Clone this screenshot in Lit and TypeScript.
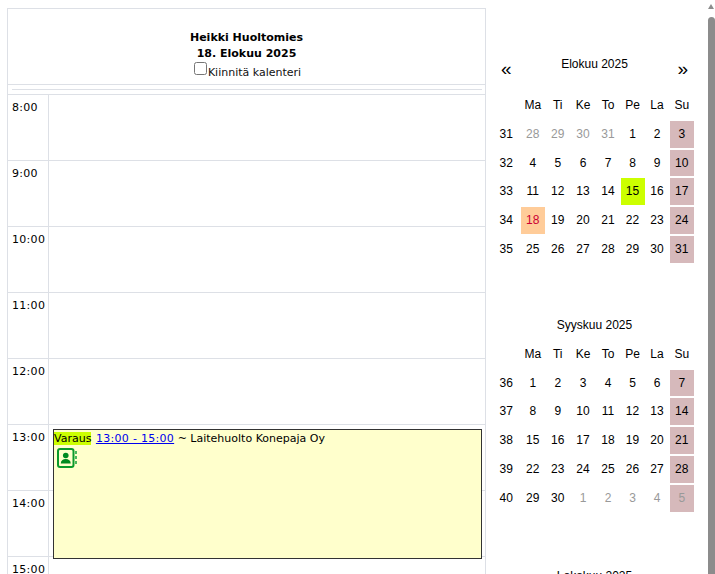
import { LitElement, html, css } from "lit";
import { customElement } from "lit/decorators.js";

const aug: [number, number[]][] = [
  [31, [28, 29, 30, 31, 1, 2, 3]],
  [32, [4, 5, 6, 7, 8, 9, 10]],
  [33, [11, 12, 13, 14, 15, 16, 17]],
  [34, [18, 19, 20, 21, 22, 23, 24]],
  [35, [25, 26, 27, 28, 29, 30, 31]],
];
const sep: [number, number[]][] = [
  [36, [1, 2, 3, 4, 5, 6, 7]],
  [37, [8, 9, 10, 11, 12, 13, 14]],
  [38, [15, 16, 17, 18, 19, 20, 21]],
  [39, [22, 23, 24, 25, 26, 27, 28]],
  [40, [29, 30, 1, 2, 3, 4, 5]],
];
const heads = ["Ma", "Ti", "Ke", "To", "Pe", "La", "Su"];
const hours = ["8:00", "9:00", "10:00", "11:00", "12:00", "13:00", "14:00", "15:00"];

@customElement("app-root")
export class AppRoot extends LitElement {
  static styles = css`
    :host {
      display: block;
      width: 715px;
      height: 574px;
      overflow: hidden;
      background: #fff;
      position: relative;
    }
    .page {
      display: flex;
      align-items: flex-start;
      padding: 8px 0 0 7px;
      color: #000;
    }
    .left {
      width: 479px;
      flex: none;
      box-sizing: border-box;
      border: 1px solid #dde0e6;
      border-bottom: 0;
      font: 11px "DejaVu Sans", sans-serif;
    }
    .head {
      height: 76px;
      box-sizing: border-box;
      padding-top: 21px;
      text-align: center;
      line-height: 16px;
      border-bottom: 1px solid #dde0e6;
    }
    .head b {
      display: block;
    }
    .pin {
      display: flex;
      justify-content: center;
      align-items: flex-start;
      height: 16px;
      padding-left: 2px;
      color: #111;
    }
    .pin input {
      margin: 0 1px 0 0;
      width: 13px;
      height: 13px;
    }
    .pin span {
      margin-top: 4px;
      line-height: 14px;
    }
    .spacer {
      height: 10px;
      box-sizing: border-box;
      padding: 4px 3px 0 4px;
      border-bottom: 1px solid #dde0e6;
    }
    .spacer i {
      display: block;
      border-top: 1px solid #dde0e6;
    }
    .hour {
      display: flex;
      height: 66px;
      box-sizing: border-box;
      border-bottom: 1px solid #dde0e6;
    }
    .time {
      width: 41px;
      flex: none;
      box-sizing: border-box;
      padding: 6px 0 0 4px;
      border-right: 1px solid #dde0e6;
      line-height: 14px;
      letter-spacing: 0.3px;
    }
    .slot {
      flex: 1;
      position: relative;
    }
    .event {
      position: absolute;
      left: 4px;
      right: 3px;
      top: 4px;
      height: 130px;
      box-sizing: border-box;
      z-index: 1;
      background: #ffffcc;
      border: 1px solid #333;
      line-height: 14px;
      padding-top: 2px;
    }
    .tag {
      background: #ccff00;
    }
    .event a {
      color: #0000ee;
      text-decoration: underline;
      letter-spacing: 0.3px;
      margin-left: 1px;
    }
    .icon {
      display: block;
      margin: 2px 0 0 3px;
    }
    .right {
      width: 205px;
      flex: none;
      margin-left: 6px;
      font: 12px "Liberation Sans", Arial, sans-serif;
    }
    .month {
      display: grid;
      grid-template-columns: 28.5px 24.5px 25.5px 25px 25px 24px 25px 24.5px;
      grid-auto-rows: 28.8px;
    }
    .m1 {
      grid-template-rows: 36px;
      padding-top: 47px;
    }
    .m2 {
      grid-template-rows: 23.6px;
      margin-top: 52.4px;
    }
    .m3 {
      margin-top: 54px;
    }
    .title {
      grid-column: 1 / -1;
      position: relative;
      text-align: center;
      padding-left: 3px;
      line-height: 18px;
    }
    .arrow {
      position: absolute;
      top: 1.5px;
      font-size: 19px;
      line-height: 24px;
    }
    .prev {
      left: 9px;
    }
    .next {
      right: 6px;
    }
    .c {
      line-height: 26.8px;
      text-align: center;
      box-sizing: border-box;
      border-top: 1px solid transparent;
      border-bottom: 1px solid transparent;
      background-clip: padding-box;
    }
    .muted {
      color: #999;
    }
    .sun {
      background-color: #d6b9bb;
    }
    .lime {
      background-color: #ccff00;
    }
    .today {
      background-color: #ffcc99;
      color: #cc0033;
    }
    .scroll {
      position: absolute;
      top: 0;
      right: 0;
      bottom: 0;
      width: 8px;
      background: #fff;
    }
    .thumb {
      position: absolute;
      top: 17px;
      bottom: 0;
      left: 1px;
      right: 0;
      background: #8c8c8c;
      border-radius: 4px 4px 0 0;
    }
    .up {
      position: absolute;
      top: 4px;
      left: 1px;
      width: 0;
      height: 0;
      border-left: 3.5px solid transparent;
      border-right: 3.5px solid transparent;
      border-bottom: 5px solid #8c8c8c;
    }
  `;

  private monthGrid(
    weeks: [number, number[]][],
    isMuted: (w: number, i: number) => boolean,
    special?: (d: number, muted: boolean) => string
  ) {
    return html`
      <div class="c"></div>
      ${heads.map((h) => html`<div class="c">${h}</div>`)}
      ${weeks.map(
        ([w, days], wi) => html`
          <div class="c">${w}</div>
          ${days.map((d, i) => {
            const m = isMuted(wi, i);
            const cls = [
              "c",
              m ? "muted" : "",
              i === 6 ? "sun" : "",
              special ? special(d, m) : "",
            ].join(" ");
            return html`<div class=${cls}>${d}</div>`;
          })}
        `
      )}
    `;
  }

  render() {
    return html`
      <div class="page">
        <div class="left">
          <div class="head">
            <b>Heikki Huoltomies</b>
            <b>18. Elokuu 2025</b>
            <label class="pin"><input type="checkbox" /><span>Kiinnitä kalenteri</span></label>
          </div>
          <div class="spacer"><i></i></div>
          ${hours.map(
            (h) => html`
              <div class="hour">
                <div class="time">${h}</div>
                <div class="slot">
                  ${h === "13:00"
                    ? html`<div class="event">
                        <span class="tag">Varaus</span>
                        <a href="#">13:00 - 15:00</a> ~ Laitehuolto Konepaja Oy
                        <svg class="icon" width="20" height="20" viewBox="0 0 20 20">
                          <rect x="1" y="1" width="15.500" height="18" rx="2" fill="none" stroke="#0a9a2a" stroke-width="2" />
                          <circle cx="8.750" cy="7.500" r="2.800" fill="#008a20" />
                          <path d="M3.750 15.500c0-3 2.200-4.500 5-4.500s5 1.500 5 4.500z" fill="#008a20" />
                          <rect x="18" y="3" width="2" height="3" fill="#4ab85a" />
                          <rect x="18" y="8" width="2" height="3" fill="#4ab85a" />
                          <rect x="18" y="13" width="2" height="3" fill="#4ab85a" />
                        </svg>
                      </div>`
                    : ""}
                </div>
              </div>
            `
          )}
        </div>
        <div class="right">
          <div class="month m1">
            <div class="title">
              <span class="arrow prev">«</span>Elokuu 2025<span class="arrow next">»</span>
            </div>
            ${this.monthGrid(
              aug,
              (w, i) => w === 0 && i < 4,
              (d, m) => (m ? "" : d === 15 ? "lime" : d === 18 ? "today" : "")
            )}
          </div>
          <div class="month m2">
            <div class="title">Syyskuu 2025</div>
            ${this.monthGrid(sep, (w, i) => w === 4 && i > 1)}
          </div>
          <div class="month m3">
            <div class="title">Lokakuu 2025</div>
          </div>
        </div>
      </div>
      <div class="scroll"><div class="up"></div><div class="thumb"></div></div>
    `;
  }
}
